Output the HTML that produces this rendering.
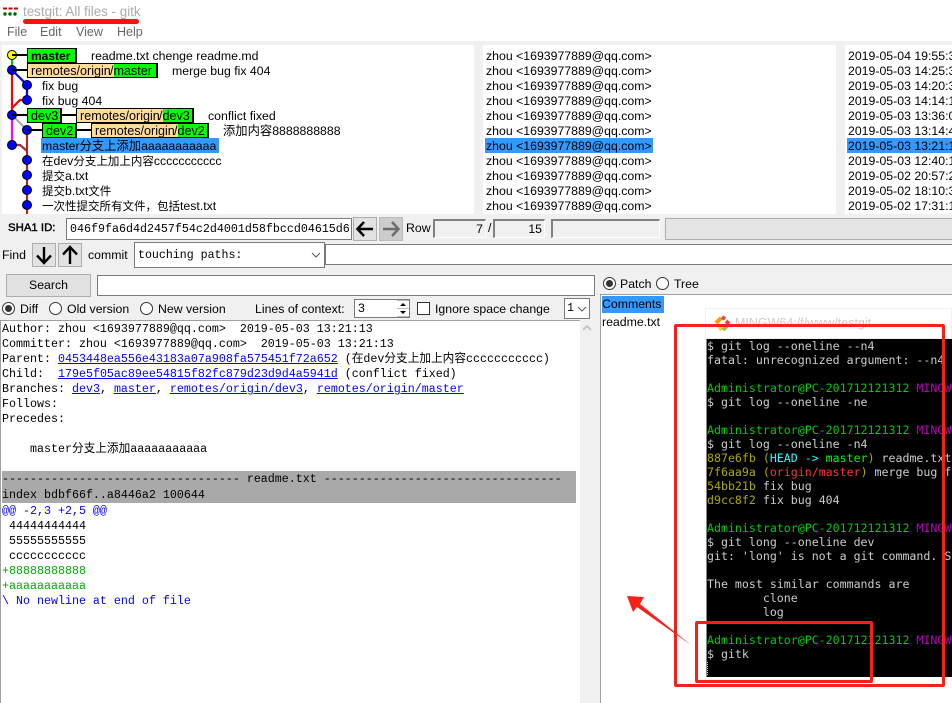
<!DOCTYPE html>
<html>
<head>
<meta charset="utf-8">
<style>
html,body{margin:0;padding:0;width:952px;height:703px;overflow:hidden;background:#f0f0f0}
body{position:relative;font-family:"Liberation Sans","Noto Sans CJK SC",sans-serif;font-size:12.3px;color:#000}
.a{position:absolute;white-space:pre;box-sizing:border-box}
.w{background:#fff}
.t{position:absolute;white-space:pre;line-height:17px;height:15px}
.t u{text-decoration:none;font-size:11.5px}
.m{font-family:"Liberation Mono","Noto Sans CJK SC",monospace}
.tag{position:absolute;height:15px;border:1px solid #000;border-width:1px 2px 1px 1px;line-height:14px;white-space:pre;background:#0f0;box-sizing:border-box;padding-left:3px;font-size:12.6px}
.tag i{font-style:normal;background:#fd9;position:absolute;left:0;top:0;bottom:0;padding-left:3px}
.tag b{font-weight:normal;position:absolute;top:0;bottom:0}
.ln{position:absolute;height:2px;background:#000}
.btn{position:absolute;background:#e1e1e1;border:1px solid #adadad;box-sizing:border-box}
.inp{position:absolute;background:#fff;border:1px solid #7a7a7a;box-sizing:border-box}
.d{position:absolute;left:2px;font-family:"Liberation Mono","Noto Sans CJK SC",monospace;font-size:11.67px;line-height:15px;height:15px;white-space:pre}
.d a{color:#00f;text-decoration:underline}
.r{position:absolute;width:13px;height:13px;border:1px solid #333;border-radius:50%;background:#fff;box-sizing:border-box}
.r.on:after{content:"";position:absolute;left:2px;top:2px;width:7px;height:7px;border-radius:50%;background:#333}
.x{position:absolute;left:707px;font-family:"DejaVu Sans Mono",monospace;font-size:11.6px;line-height:14px;height:14px;white-space:pre;color:#ccc}
.g{color:#0c0}.p{color:#b0b}.y{color:#aa0}.c{color:#2ff}.rd{color:#f33}.lg{color:#0f0}
</style>
</head>
<body>
<!-- title bar -->
<div class="a w" style="left:0;top:0;width:952px;height:41px"></div>
<svg class="a" style="left:3px;top:7px" width="16" height="10">
<path d="M0 1.5h4M5.500 1.500h4M11 1.500h4" stroke="#c00" stroke-width="2" fill="none"/>
<circle cx="2" cy="7" r="1.700" fill="#060"/><circle cx="7" cy="7" r="1.700" fill="#060"/><circle cx="12" cy="7" r="1.700" fill="#060"/>
</svg>
<div class="a" style="left:23px;top:4px;font-size:13.400px;line-height:16px;color:#aaa">testgit: All files - gitk</div>
<div class="a" style="left:23px;top:19px;width:116px;height:5px;background:#f11;border-radius:3px"></div>
<div class="a" style="left:7px;top:25px;line-height:15px;font-size:12.500px;color:#666">File</div>
<div class="a" style="left:40px;top:25px;line-height:15px;font-size:12.500px;color:#666">Edit</div>
<div class="a" style="left:76px;top:25px;line-height:15px;font-size:12.500px;color:#666">View</div>
<div class="a" style="left:117px;top:25px;line-height:15px;font-size:12.500px;color:#666">Help</div>

<!-- panes -->
<div class="a w" style="left:2px;top:45px;width:472px;height:169px"></div>
<div class="a w" style="left:483px;top:45px;width:353px;height:169px"></div>
<div class="a w" style="left:845px;top:45px;width:107px;height:169px"></div>

<!-- graph -->
<svg class="a" style="left:0;top:45px" width="60" height="170">
<g fill="none" stroke-width="2.200">
<path d="M12 10V25" stroke="#0c0"/>
<path d="M12 25L27 40V55" stroke="#00f"/>
<path d="M12 25V70M27 55H20L12 63" stroke="#f00"/>
<path d="M12 70V100" stroke="#f0f"/>
<path d="M12 70L27 85" stroke="#aaa"/>
<path d="M27 85V169M12 100H20L27 106" stroke="#a52a2a"/>
</g>
<g fill="#00f" stroke="#000">
<circle cx="12" cy="10" r="4.500" fill="#ff0"/>
<circle cx="12" cy="25" r="4.500"/><circle cx="27" cy="40" r="4.500"/><circle cx="27" cy="55" r="4.500"/>
<circle cx="12" cy="70" r="4.500"/><circle cx="27" cy="85" r="4.500"/><circle cx="12" cy="100" r="4.500"/>
<circle cx="27" cy="115" r="4.500"/><circle cx="27" cy="130" r="4.500"/><circle cx="27" cy="145" r="4.500"/><circle cx="27" cy="160" r="4.500"/>
</g>
</svg>
<div class="ln" style="left:12px;top:54px;width:15px"></div>
<div class="ln" style="left:12px;top:69px;width:15px"></div>
<div class="ln" style="left:12px;top:114px;width:15px"></div>
<div class="ln" style="left:62px;top:114px;width:15px"></div>
<div class="ln" style="left:27px;top:129px;width:15px"></div>
<div class="ln" style="left:77px;top:129px;width:15px"></div>

<div class="tag" style="left:27px;top:48px;width:50px;font-weight:bold;font-size:12px">master</div>
<div class="tag" style="left:27px;top:63px;width:131px"><i style="width:83px">remotes/origin</i><b style="left:82px">/master</b></div>
<div class="tag" style="left:27px;top:108px;width:35px">dev3</div>
<div class="tag" style="left:76px;top:108px;width:118px"><i style="width:83px">remotes/origin</i><b style="left:82px">/dev3</b></div>
<div class="tag" style="left:42px;top:123px;width:35px">dev2</div>
<div class="tag" style="left:91px;top:123px;width:118px"><i style="width:83px">remotes/origin</i><b style="left:82px">/dev2</b></div>

<div class="t" style="left:91px;top:48px">readme.txt chenge readme.md</div>
<div class="t" style="left:172px;top:63px">merge bug fix 404</div>
<div class="t" style="left:42px;top:78px">fix bug</div>
<div class="t" style="left:42px;top:93px">fix bug 404</div>
<div class="t" style="left:208px;top:108px">conflict fixed</div>
<div class="t" style="left:223px;top:123px">添加内容8888888888</div>
<div class="t" style="left:41px;top:138px;width:178px;background:#3399ff;padding-left:1px;box-sizing:border-box">master分支上添加aaaaaaaaaaa</div>
<div class="t" style="left:42px;top:153px"><u>在</u>dev<u>分支上加上内容</u>ccccccccccc</div>
<div class="t" style="left:42px;top:168px"><u>提交</u>a.txt</div>
<div class="t" style="left:42px;top:183px"><u>提交</u>b.txt<u>文件</u></div>
<div class="t" style="left:42px;top:198px"><u>一次性提交所有文件，包括</u>test.txt</div>

<!-- authors -->
<div class="t" style="left:486px;top:48px">zhou &lt;1693977889@qq.com&gt;</div>
<div class="t" style="left:486px;top:63px">zhou &lt;1693977889@qq.com&gt;</div>
<div class="t" style="left:486px;top:78px">zhou &lt;1693977889@qq.com&gt;</div>
<div class="t" style="left:486px;top:93px">zhou &lt;1693977889@qq.com&gt;</div>
<div class="t" style="left:486px;top:108px">zhou &lt;1693977889@qq.com&gt;</div>
<div class="t" style="left:486px;top:123px">zhou &lt;1693977889@qq.com&gt;</div>
<div class="t" style="left:485px;top:138px;width:168px;background:#3399ff;padding-left:1px;box-sizing:border-box">zhou &lt;1693977889@qq.com&gt;</div>
<div class="t" style="left:486px;top:153px">zhou &lt;1693977889@qq.com&gt;</div>
<div class="t" style="left:486px;top:168px">zhou &lt;1693977889@qq.com&gt;</div>
<div class="t" style="left:486px;top:183px">zhou &lt;1693977889@qq.com&gt;</div>
<div class="t" style="left:486px;top:198px">zhou &lt;1693977889@qq.com&gt;</div>

<!-- dates -->
<div class="t" style="left:848px;top:48px">2019-05-04 19:55:37</div>
<div class="t" style="left:848px;top:63px">2019-05-03 14:25:37</div>
<div class="t" style="left:848px;top:78px">2019-05-03 14:20:37</div>
<div class="t" style="left:848px;top:93px">2019-05-03 14:14:17</div>
<div class="t" style="left:848px;top:108px">2019-05-03 13:36:07</div>
<div class="t" style="left:848px;top:123px">2019-05-03 13:14:47</div>
<div class="t" style="left:847px;top:138px;width:105px;background:#3399ff;padding-left:1px;box-sizing:border-box;overflow:hidden">2019-05-03 13:21:13</div>
<div class="t" style="left:848px;top:153px">2019-05-03 12:40:17</div>
<div class="t" style="left:848px;top:168px">2019-05-02 20:57:27</div>
<div class="t" style="left:848px;top:183px">2019-05-02 18:10:37</div>
<div class="t" style="left:848px;top:198px">2019-05-02 17:31:17</div>

<!-- SHA row -->
<div class="t" style="left:8px;top:220px;font-size:11.400px;-webkit-text-stroke:.4px #000">SHA1 ID:</div>
<div class="inp m" style="left:66px;top:218px;width:286px;height:22px;line-height:20px;padding-left:3px;font-size:11.670px;white-space:pre;overflow:hidden">046f9fa6d4d2457f54c2d4001d58fbccd04615d6</div>
<div class="btn" style="left:353px;top:217px;width:24px;height:24px">
<svg width="22" height="22"><path d="M19 11H4M10 4L3.500 11L10 18" fill="none" stroke="#000" stroke-width="2.500"/></svg></div>
<div class="btn" style="left:379px;top:217px;width:24px;height:24px;background:#ccc;border-color:#bbb">
<svg width="22" height="22"><path d="M3 11H18M12 4L18.500 11L12 18" fill="none" stroke="#6d6d6d" stroke-width="2.500"/></svg></div>
<div class="t" style="left:406px;top:220px">Row</div>
<div class="a" style="left:433px;top:219px;width:53px;height:19px;background:#f0f0f0;border:1px solid #fff;border-top:2px solid #808080;border-left:2px solid #808080;text-align:right;line-height:16px;padding-right:2px">7</div>
<div class="t" style="left:488px;top:220px">/</div>
<div class="a" style="left:493px;top:219px;width:52px;height:19px;background:#f0f0f0;border:1px solid #fff;border-top:2px solid #808080;border-left:2px solid #808080;text-align:right;line-height:16px;padding-right:2px">15</div>
<div class="a" style="left:551px;top:219px;width:109px;height:19px;background:#f0f0f0;border:1px solid #fff;border-top:2px solid #808080;border-left:2px solid #808080"></div>
<div class="a" style="left:665px;top:218px;width:290px;height:22px;background:#e5e5e5;border:1px solid #adadad"></div>

<!-- Find row -->
<div class="t" style="left:2px;top:247px">Find</div>
<div class="btn" style="left:32px;top:243px;width:24px;height:24px">
<svg width="22" height="22"><path d="M11 3V18M4 11.500L11 19L18 11.500" fill="none" stroke="#000" stroke-width="2.400"/></svg></div>
<div class="btn" style="left:58px;top:243px;width:24px;height:24px">
<svg width="22" height="22"><path d="M11 20V4M4 10.500L11 3L18 10.500" fill="none" stroke="#000" stroke-width="2.400"/></svg></div>
<div class="t" style="left:88px;top:247px">commit</div>
<div class="inp" style="left:325px;top:244px;width:630px;height:21px"></div>
<div class="inp m" style="left:134px;top:242px;width:191px;height:26px;line-height:25px;padding-left:3px;font-size:11.600px;white-space:pre">touching paths:<svg style="position:absolute;left:176px;top:9px" width="10" height="7"><path d="M1 1L5 5L9 1" fill="none" stroke="#555"/></svg></div>

<!-- Search row -->
<div class="btn" style="left:6px;top:274px;width:85px;height:23px;text-align:center;line-height:21px">Search</div>
<div class="inp" style="left:97px;top:275px;width:498px;height:21px"></div>

<!-- Diff options -->
<div class="r on" style="left:2px;top:302px"></div>
<div class="t" style="left:20px;top:301px">Diff</div>
<div class="r" style="left:49px;top:302px"></div>
<div class="t" style="left:67px;top:301px">Old version</div>
<div class="r" style="left:140px;top:302px"></div>
<div class="t" style="left:158px;top:301px">New version</div>
<div class="t" style="left:255px;top:301px">Lines of context:</div>
<div class="inp" style="left:354px;top:299px;width:56px;height:19px;line-height:17px;padding-left:3px">3</div>
<svg class="a" style="left:397px;top:300px" width="12" height="17">
<path d="M0 .5H12M0 8.500H12M0 16.500H12" stroke="#bbb"/><path d="M3 6L6 3L9 6ZM3 11L6 14L9 11Z" fill="#000"/>
</svg>
<div class="a" style="left:417px;top:302px;width:13px;height:13px;background:#fff;border:1px solid #333"></div>
<div class="t" style="left:435px;top:301px">Ignore space change</div>
<div class="inp m" style="left:564px;top:298px;width:26px;height:21px;line-height:19px;padding-left:2px;font-size:11.670px;overflow:hidden">1<svg style="position:absolute;left:12px;top:7px" width="10" height="7"><path d="M1 1L5 5L9 1" fill="none" stroke="#555"/></svg></div>

<!-- Diff pane -->
<div class="a w" style="left:0;top:320px;width:580px;height:383px;border-top:1px solid #a0a0a0;border-left:1px solid #a0a0a0"></div>
<div class="a" style="left:580px;top:320px;width:21px;height:383px;background:#f0f0f0"></div>
<svg class="a" style="left:580px;top:323px" width="14" height="10"><path d="M3 7L7 3L11 7" fill="none" stroke="#c8c8c8" stroke-width="2"/></svg>
<div class="d" style="top:322px">Author: zhou &lt;1693977889@qq.com&gt;  2019-05-03 13:21:13</div>
<div class="d" style="top:337px">Committer: zhou &lt;1693977889@qq.com&gt;  2019-05-03 13:21:13</div>
<div class="d" style="top:352px">Parent: <a>0453448ea556e43183a07a908fa575451f72a652</a> (在dev分支上加上内容ccccccccccc)</div>
<div class="d" style="top:367px">Child:  <a>179e5f05ac89ee54815f82fc879d23d9d4a5941d</a> (conflict fixed)</div>
<div class="d" style="top:382px">Branches: <a>dev3</a>, <a>master</a>, <a>remotes/origin/dev3</a>, <a>remotes/origin/master</a></div>
<div class="d" style="top:397px">Follows:</div>
<div class="d" style="top:412px">Precedes:</div>
<div class="d" style="top:442px">    master分支上添加aaaaaaaaaaa</div>
<div class="a" style="left:2px;top:471px;width:574px;height:32px;background:#a9a9a9"></div>
<div class="d" style="top:472px">---------------------------------- readme.txt ----------------------------------</div>
<div class="d" style="top:488px">index bdbf66f..a8446a2 100644</div>
<div class="d" style="top:504px;color:#00f">@@ -2,3 +2,5 @@</div>
<div class="d" style="top:519px"> 44444444444</div>
<div class="d" style="top:534px"> 55555555555</div>
<div class="d" style="top:549px"> ccccccccccc</div>
<div class="d" style="top:564px;color:#0a0">+88888888888</div>
<div class="d" style="top:579px;color:#0a0">+aaaaaaaaaaa</div>
<div class="d" style="top:594px;color:#00f">\ No newline at end of file</div>

<!-- Right pane -->
<div class="r on" style="left:603px;top:277px"></div>
<div class="t" style="left:620px;top:276px">Patch</div>
<div class="r" style="left:656px;top:277px"></div>
<div class="t" style="left:674px;top:276px">Tree</div>
<div class="a w" style="left:600px;top:294px;width:352px;height:409px;border-top:1px solid #a0a0a0;border-left:1px solid #a0a0a0"></div>
<div class="t" style="left:602px;top:296px;width:62px;height:17px;line-height:17px;background:#3399ff">Comments</div>
<div class="t" style="left:602px;top:314px">readme.txt</div>

<!-- Terminal window -->
<div class="a" style="left:705px;top:308px;width:247px;height:31px;background:#fff;border:1px solid #f0f0f0"></div>
<svg class="a" style="left:714px;top:314px" width="17" height="18">
<path d="M2 9L7 4" stroke="#f90" stroke-width="4"/><path d="M8 3L11 5" stroke="#e44" stroke-width="4"/><path d="M12 7L15 10" stroke="#e44" stroke-width="4"/><path d="M3 10L8 16" stroke="#fc3" stroke-width="4"/><path d="M9 16L14 11" stroke="#8c4" stroke-width="4"/>
</svg>
<div class="a" style="left:735px;top:315px;font-size:12.500px;line-height:16px;color:#ccc">MINGW64:/f/www/testgit</div>
<div class="a" style="left:706px;top:339px;width:246px;height:338px;background:#000;border-left:1px solid #888"></div>
<div class="x" style="top:339px">$ git log --oneline --n4</div>
<div class="x" style="top:353px">fatal: unrecognized argument: --n4</div>
<div class="x" style="top:381px"><span class="g">Administrator@PC-201712121312</span> <span class="p">MINGW64</span></div>
<div class="x" style="top:395px">$ git log --oneline -ne</div>
<div class="x" style="top:423px"><span class="g">Administrator@PC-201712121312</span> <span class="p">MINGW64</span></div>
<div class="x" style="top:437px">$ git log --oneline -n4</div>
<div class="x" style="top:451px"><span class="y">887e6fb (</span><span class="c">HEAD -&gt; </span><span class="lg">master</span><span class="y">)</span> readme.txt</div>
<div class="x" style="top:465px"><span class="y">7f6aa9a (</span><span class="rd">origin/master</span><span class="y">)</span> merge bug fix</div>
<div class="x" style="top:479px"><span class="y">54bb21b</span> fix bug</div>
<div class="x" style="top:493px"><span class="y">d9cc8f2</span> fix bug 404</div>
<div class="x" style="top:521px"><span class="g">Administrator@PC-201712121312</span> <span class="p">MINGW64</span></div>
<div class="x" style="top:535px">$ git long --oneline dev</div>
<div class="x" style="top:549px">git: 'long' is not a git command. See</div>
<div class="x" style="top:577px">The most similar commands are</div>
<div class="x" style="top:591px">        clone</div>
<div class="x" style="top:605px">        log</div>
<div class="x" style="top:633px"><span class="g">Administrator@PC-201712121312</span> <span class="p">MINGW64</span></div>
<div class="x" style="top:647px">$ gitk</div>
<div class="a" style="left:707px;top:662px;width:1px;height:13px;border-left:1px dotted #ccc"></div>

<!-- Annotations -->
<div class="a" style="left:674px;top:324px;width:271px;height:363px;border:3px solid #f8201a;border-radius:2px"></div>
<div class="a" style="left:695px;top:621px;width:178px;height:62px;border:3px solid #f8201a;border-radius:2px"></div>
<svg class="a" style="left:620px;top:590px" width="75" height="60">
<path d="M7 6L24 7L20 14L71 55L17 17L13 22Z" fill="#f8201a"/>
</svg>
</body>
</html>
